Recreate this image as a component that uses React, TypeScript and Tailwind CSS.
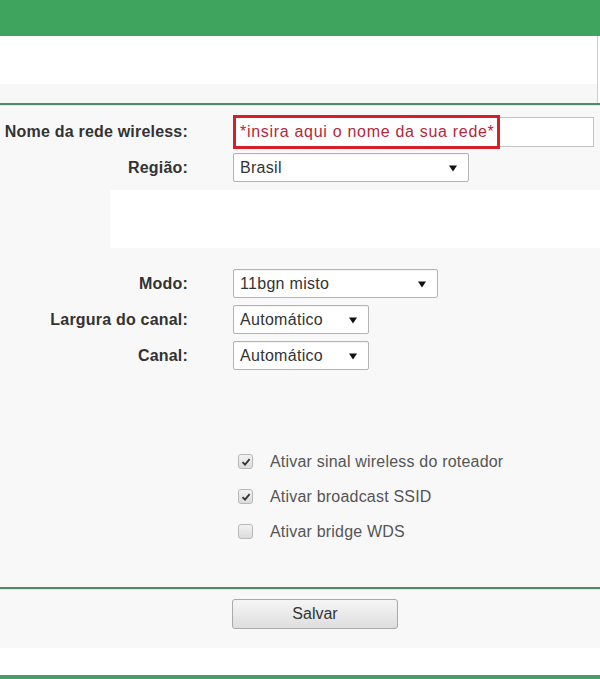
import type { ReactNode } from 'react';

const font = { fontFamily: '"Liberation Sans", Arial, sans-serif' };

function Arrow() {
  return (
    <svg className="shrink-0" width="8" height="8" viewBox="0 0 8 8">
      <path d="M0 1.5h8L4 7.5z" fill="#111" />
    </svg>
  );
}

type SelectProps = { value: string; width: string };

function FakeSelect({ value, width }: SelectProps) {
  return (
    <div
      className={`flex h-[29px] items-center justify-between rounded-[2px] border border-[#b4b4b4] bg-white pl-[6px] pr-[11px] text-[16px] tracking-[0.3px] text-[#333] shadow-[inset_0_1px_1px_rgba(0,0,0,0.05)] ${width}`}
    >
      <span>{value}</span>
      <Arrow />
    </div>
  );
}

type RowProps = { label: string; children: ReactNode; className?: string };

function Row({ label, children, className = '' }: RowProps) {
  return (
    <div className={`flex items-center ${className}`}>
      <span className="w-[188px] text-right text-[16px] font-bold tracking-[0.2px] text-[#333]">{label}</span>
      <div className="ml-[45px]">{children}</div>
    </div>
  );
}

function Checkbox({ checked, label }: { checked: boolean; label: string }) {
  return (
    <div className="flex h-[35px] items-center pl-[238px]">
      <span className="flex h-[15px] w-[15px] items-center justify-center rounded-[3px] border border-[#b8b8b8] bg-gradient-to-b from-[#f2f2f2] to-[#dcdcdc]">
        {checked ? (
          <svg width="10" height="10" viewBox="0 0 10 10">
            <path d="M1.5 5.2 4 7.6 8.6 2.2" fill="none" stroke="#333" strokeWidth="1.8" />
          </svg>
        ) : null}
      </span>
      <span className="ml-[17px] text-[16px] tracking-[0.2px] text-[#555]">{label}</span>
    </div>
  );
}

export default function App() {
  return (
    <div className="flex h-[679px] w-[600px] flex-col overflow-hidden bg-white" style={font}>
      <div className="h-[36px] bg-[#3fa45d]" />
      <div className="flex h-[67px] w-[598px] flex-col border-r border-[#cfcfcf]">
        <div className="h-[48px] bg-white" />
        <div className="flex-1 bg-[#f7f7f7]" />
      </div>
      <div className="h-[2px] bg-[#4f8b6b]" />
      <div className="h-[1px] bg-[#d6ebdd]" />

      <div className="flex flex-1 flex-col bg-[#f8f8f8]">
        <Row label="Nome da rede wireless:" className="mt-[11px]">
          <div className="relative">
            <div className="flex h-[30px] w-[361px] items-center border border-[#c4c4c4] bg-white pl-[6px] text-[16px] tracking-[0.7px] text-[#b3283d]">
              *insira aqui o nome da sua rede*
            </div>
            <div className="absolute left-0 top-[-2px] h-[34px] w-[267px] border-[3px] border-[#d61f2b]" />
          </div>
        </Row>
        <Row label="Região:" className="mt-[6px]">
          <FakeSelect value="Brasil" width="w-[236px]" />
        </Row>

        <div className="ml-[110px] mt-[8px] h-[58px] bg-white" />

        <Row label="Modo:" className="mt-[21px]">
          <FakeSelect value="11bgn misto" width="w-[205px]" />
        </Row>
        <Row label="Largura do canal:" className="mt-[7px]">
          <FakeSelect value="Automático" width="w-[136px]" />
        </Row>
        <Row label="Canal:" className="mt-[7px]">
          <FakeSelect value="Automático" width="w-[136px]" />
        </Row>

        <div className="mt-[74px] flex flex-col">
          <Checkbox checked label="Ativar sinal wireless do roteador" />
          <Checkbox checked label="Ativar broadcast SSID" />
          <Checkbox checked={false} label="Ativar bridge WDS" />
        </div>
      </div>

      <div className="h-[2px] bg-[#4f8b6b]" />
      <div className="h-[1px] bg-[#d6ebdd]" />
      <div className="flex h-[58px] items-start bg-[#f8f8f8] pl-[232px] pt-[9px]">
        <button className="h-[30px] w-[166px] rounded-[3px] border border-[#a9a9a9] bg-gradient-to-b from-[#f6f6f6] to-[#dedede] text-[16px] text-[#333]">
          Salvar
        </button>
      </div>
      <div className="h-[27px] bg-white" />
      <div className="h-[4px] bg-[#4c9b6a]" />
    </div>
  );
}
